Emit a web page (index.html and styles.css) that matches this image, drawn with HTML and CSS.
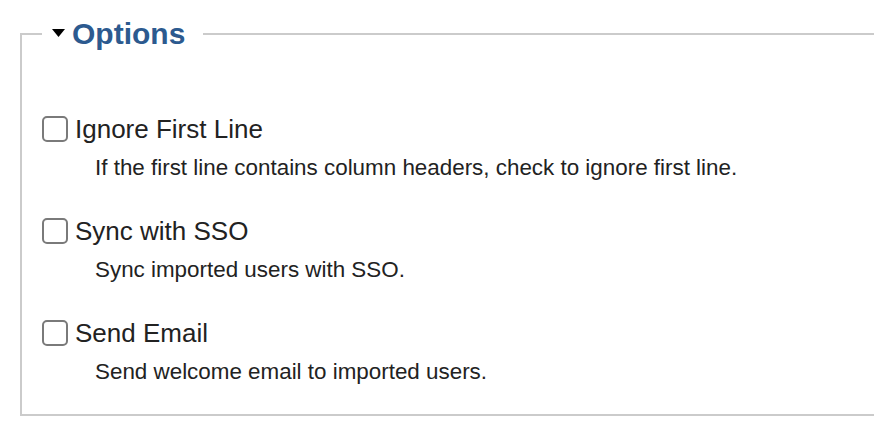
FILE: index.html
```html
<!DOCTYPE html>
<html lang="en">
<head>
<meta charset="utf-8">
<title>Options</title>
<link rel="stylesheet" href="styles.css">
</head>
<body>
<fieldset class="options">
  <legend class="options-legend">
    <svg class="caret" width="13" height="8" viewBox="0 0 13 8"><path d="M0 0 H13 L6.5 8 Z" fill="#000"/></svg>
    <span class="options-title">Options</span>
  </legend>
  <div class="option-list">
    <div class="option">
      <label class="option-row"><input type="checkbox" class="check"><span class="option-label">Ignore First Line</span></label>
      <div class="option-desc">If the first line contains column headers, check to ignore first line.</div>
    </div>
    <div class="option">
      <label class="option-row"><input type="checkbox" class="check"><span class="option-label">Sync with SSO</span></label>
      <div class="option-desc">Sync imported users with SSO.</div>
    </div>
    <div class="option">
      <label class="option-row"><input type="checkbox" class="check"><span class="option-label">Send Email</span></label>
      <div class="option-desc">Send welcome email to imported users.</div>
    </div>
  </div>
</fieldset>
</body>
</html>
```
FILE: styles.css
```css
html, body {
  margin: 0;
  padding: 0;
  background: #fff;
  overflow: hidden;
}
body {
  font-family: "Liberation Sans", Arial, Helvetica, sans-serif;
  color: #222;
}
.options {
  margin: 17px -12px 0 20px;
  padding: 0 0 30px 0;
  border: 2px solid #cbcbcb;
  min-width: 0;
}
.options-legend {
  margin-left: 20px;
  padding: 0 18px 0 10px;
  height: 34px;
  line-height: 34px;
  display: flex;
  align-items: center;
  gap: 7px;
}
.caret {
  display: block;
  margin-bottom: 3px;
}
.options-title {
  font-size: 30px;
  font-weight: bold;
  color: #2c5a8f;
}
.option-list {
  margin-top: 65px;
  padding-left: 20px;
  display: flex;
  flex-direction: column;
  gap: 38.25px;
}
.option-row {
  display: flex;
  align-items: center;
  gap: 7px;
  height: 26px;
}
.check {
  appearance: none;
  -webkit-appearance: none;
  margin: 0;
  width: 26px;
  height: 26px;
  box-sizing: border-box;
  border: 2px solid #7a7a7a;
  border-radius: 5px;
  background: #fff;
}
.option-label {
  font-size: 26px;
  line-height: 30px;
  color: #222;
}
.option-desc {
  margin-top: 13.75px;
  padding-left: 53px;
  font-size: 22.4px;
  line-height: 24px;
  color: #222;
}
```
